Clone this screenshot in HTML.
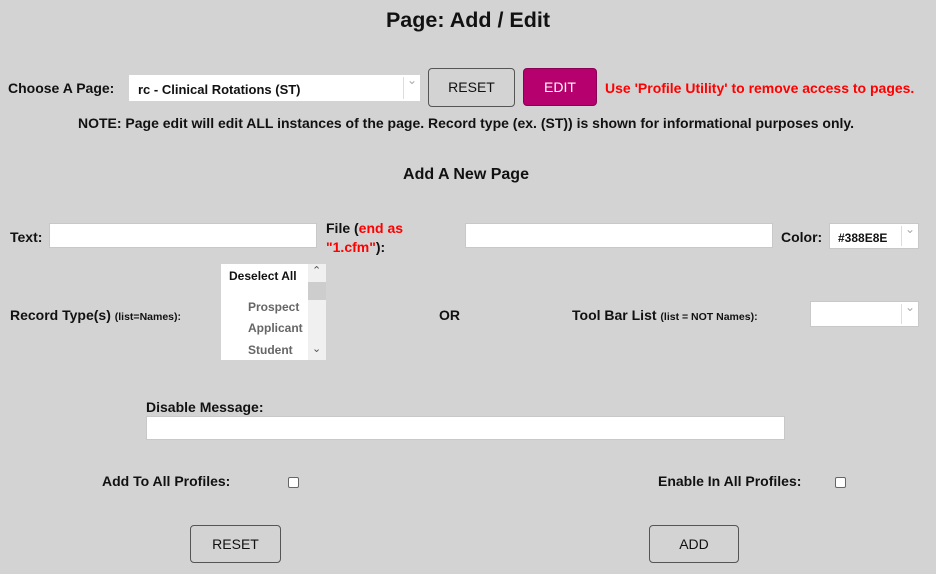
<!DOCTYPE html><html><head><style>
body{margin:0;width:936px;height:574px;background:#d3d3d3;font-family:"Liberation Sans",sans-serif;color:#111;position:relative;overflow:hidden}
.a{position:absolute;white-space:nowrap}
.b{font-weight:bold;font-size:14px}
.in{position:absolute;background:#fff;border:1px solid #c8c8c8;box-sizing:border-box}
.btn{position:absolute;border:1px solid #555;border-radius:4px;background:#d3d3d3;font-size:14px;text-align:center;box-sizing:border-box}
.red{color:#f00}
.sel::after{content:"⌄";position:absolute;right:3px;top:-2px;color:#aaa;font-size:12px}
.sel::before{content:"";position:absolute;right:16px;top:2px;bottom:2px;border-left:1px solid #ddd}
.cb{position:absolute;width:9px;height:9px;background:#fff;border:1px solid #666;border-radius:2px}
</style></head><body>
<div class="a" style="left:0;width:936px;text-align:center;top:8px;font-size:21.5px;font-weight:bold">Page: Add / Edit</div>
<div class="a b" style="left:8px;top:80px">Choose A Page:</div>
<div class="in sel" style="left:129px;top:75px;width:291px;height:26px;border:none"><span class="a b" style="left:9px;top:7px;font-size:13px">rc - Clinical Rotations (ST)</span></div>
<div class="btn" style="left:428px;top:68px;width:87px;height:39px;line-height:36px">RESET</div>
<div class="btn" style="left:523px;top:68px;width:74px;height:38px;line-height:36px;background:#b5006e;color:#fff;border:1px solid #8a0055">EDIT</div>
<div class="a b red" style="left:605px;top:80px">Use 'Profile Utility' to remove access to pages.</div>
<div class="a b" style="left:0;width:932px;text-align:center;top:115px">NOTE: Page edit will edit ALL instances of the page. Record type (ex. (ST)) is shown for informational purposes only.</div>
<div class="a" style="left:0;width:932px;text-align:center;top:166px;font-weight:bold;font-size:16px">Add A New Page</div>
<div class="a b" style="left:10px;top:229px">Text:</div>
<div class="in" style="left:49px;top:223px;width:268px;height:25px"></div>
<div class="a b" style="left:326px;top:219px;line-height:19px">File (<span class="red">end as</span><br><span class="red">"1.cfm"</span>):</div>
<div class="in" style="left:465px;top:223px;width:308px;height:25px"></div>
<div class="a b" style="left:781px;top:229px">Color:</div>
<div class="in sel" style="left:829px;top:223px;width:90px;height:26px"><span class="a b" style="left:8px;top:7px;font-size:12px">#388E8E</span></div>
<div class="a b" style="left:10px;top:307px">Record Type(s) <span style="font-size:10.5px">(list=Names):</span></div>
<div class="in" style="left:221px;top:264px;width:105px;height:96px;border:none">
<div class="a b" style="left:8px;top:5px;font-size:12px">Deselect All</div>
<div class="a b" style="left:27px;top:36px;font-size:12px;color:#666">Prospect</div>
<div class="a b" style="left:27px;top:57px;font-size:12px;color:#666">Applicant</div>
<div class="a b" style="left:27px;top:79px;font-size:12px;color:#666">Student</div>
<div style="position:absolute;left:87px;top:0;width:18px;height:96px;background:#f0f0f0"></div>
<div style="position:absolute;left:87px;top:18px;width:18px;height:18px;background:#cdcdcd"></div>
<div class="a" style="left:91px;top:0;font-size:11px;color:#555">⌃</div>
<div class="a" style="left:91px;top:78px;font-size:11px;color:#555">⌄</div>
</div>
<div class="a b" style="left:439px;top:307px">OR</div>
<div class="a b" style="left:572px;top:307px">Tool Bar List <span style="font-size:10.5px">(list = NOT Names):</span></div>
<div class="in sel" style="left:810px;top:301px;width:109px;height:26px"></div>
<div class="a b" style="left:146px;top:399px">Disable Message:</div>
<div class="in" style="left:146px;top:416px;width:639px;height:24px"></div>
<div class="a b" style="left:102px;top:473px">Add To All Profiles:</div>
<div class="cb" style="left:288px;top:477px"></div>
<div class="a b" style="left:658px;top:473px">Enable In All Profiles:</div>
<div class="cb" style="left:835px;top:477px"></div>
<div class="btn" style="left:190px;top:525px;width:91px;height:38px;line-height:36px">RESET</div>
<div class="btn" style="left:649px;top:525px;width:90px;height:38px;line-height:36px">ADD</div>
</body></html>
